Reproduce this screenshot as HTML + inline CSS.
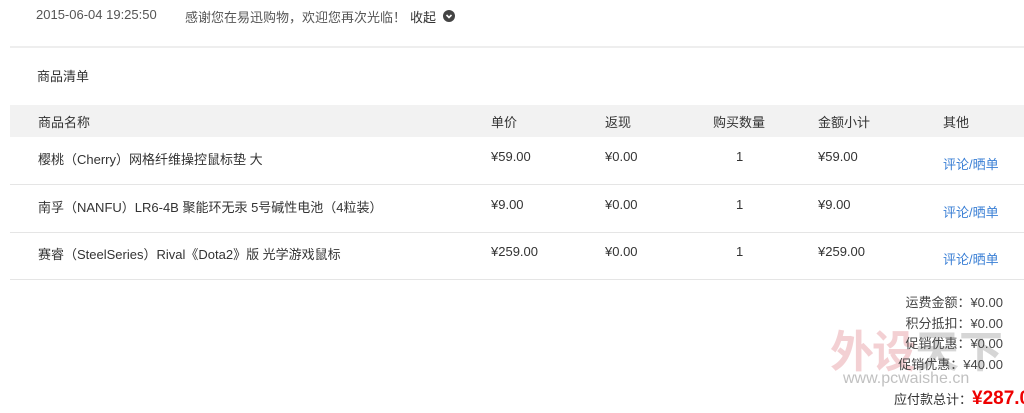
<!DOCTYPE html><html><head><meta charset="utf-8"><style>
body{margin:0;width:1024px;height:413px;overflow:hidden;background:#fff;font-family:"Liberation Sans","Noto Sans CJK SC",sans-serif;font-size:13px;color:#333;position:relative}
.a{position:absolute;white-space:nowrap}
.hr{position:absolute;left:10px;width:1014px;height:1px;background:#e5e5e5}
.r{position:absolute;right:21px;text-align:right;white-space:nowrap;color:#444}
.lk{color:#3a7fd5}
</style></head><body>
<div class="a" style="left:36px;top:7px;color:#555">2015-06-04 19:25:50</div>
<div class="a" style="left:185px;top:7px;color:#555">感谢您在易迅购物，欢迎您再次光临！</div>
<div class="a" style="left:410px;top:7px;color:#333">收起</div>
<div class="a" style="left:443px;top:10px;width:12px;height:12px;border-radius:50%;background:#444"><svg width="12" height="12"><path d="M3.5 5 L6 7.5 L8.5 5" stroke="#fff" stroke-width="1.6" fill="none"/></svg></div>
<div class="hr" style="top:46px;height:2px;background:#eee"></div>
<div class="a" style="left:37px;top:66px;color:#333">商品清单</div>
<div class="a" style="left:10px;top:105px;width:1014px;height:32px;background:#f2f2f2"></div>
<div class="a" style="left:38px;top:112px">商品名称</div>
<div class="a" style="left:491px;top:112px">单价</div>
<div class="a" style="left:605px;top:112px">返现</div>
<div class="a" style="left:713px;top:112px">购买数量</div>
<div class="a" style="left:818px;top:112px">金额小计</div>
<div class="a" style="left:943px;top:112px">其他</div>

<div class="a" style="left:38px;top:149px">樱桃（Cherry）网格纤维操控鼠标垫 大</div>
<div class="a" style="left:491px;top:149px">¥59.00</div><div class="a" style="left:605px;top:149px">¥0.00</div>
<div class="a" style="left:736px;top:149px">1</div><div class="a" style="left:818px;top:149px">¥59.00</div>
<div class="a lk" style="left:943px;top:154px">评论/晒单</div>
<div class="hr" style="top:184px"></div>

<div class="a" style="left:38px;top:197px">南孚（NANFU）LR6-4B 聚能环无汞 5号碱性电池（4粒装）</div>
<div class="a" style="left:491px;top:197px">¥9.00</div><div class="a" style="left:605px;top:197px">¥0.00</div>
<div class="a" style="left:736px;top:197px">1</div><div class="a" style="left:818px;top:197px">¥9.00</div>
<div class="a lk" style="left:943px;top:202px">评论/晒单</div>
<div class="hr" style="top:232px"></div>

<div class="a" style="left:38px;top:244px">赛睿（SteelSeries）Rival《Dota2》版 光学游戏鼠标</div>
<div class="a" style="left:491px;top:244px">¥259.00</div><div class="a" style="left:605px;top:244px">¥0.00</div>
<div class="a" style="left:736px;top:244px">1</div><div class="a" style="left:818px;top:244px">¥259.00</div>
<div class="a lk" style="left:943px;top:249px">评论/晒单</div>
<div class="hr" style="top:279px"></div>

<div class="a" style="left:830px;top:316px;font-size:44px;font-weight:bold;color:rgba(220,120,130,.35);letter-spacing:-2px">外设</div>
<div class="a" style="left:915px;top:316px;font-size:44px;font-weight:bold;color:rgba(120,120,120,.3)">天下</div>
<div class="a" style="left:843px;top:370px;font-size:16px;color:rgba(130,130,130,.5)">www.pcwaishe.cn</div>

<div class="r" style="top:292px">运费金额：¥0.00</div>
<div class="r" style="top:313px">积分抵扣：¥0.00</div>
<div class="r" style="top:333px">促销优惠：¥0.00</div>
<div class="r" style="top:354px">促销优惠：¥40.00</div>
<div class="a" style="left:894px;top:388px;color:#333">应付款总计：<span style="color:#e00;font-weight:bold;font-size:19px">¥287.00</span></div>
</body></html>
